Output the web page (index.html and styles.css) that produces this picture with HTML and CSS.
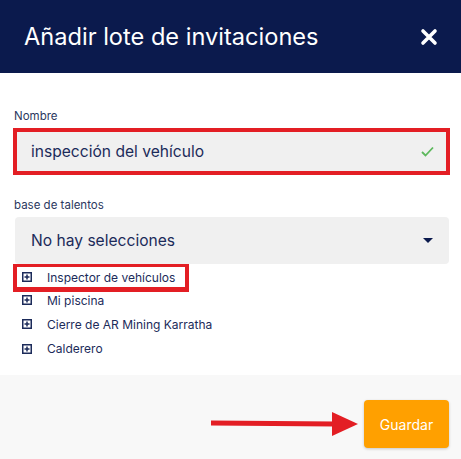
FILE: index.html
```html
<!DOCTYPE html>
<html lang="es">

<head>
    <meta charset="UTF-8">
    <meta name="viewport" content="width=device-width, initial-scale=1.0">
    <title>Añadir lote de invitaciones</title>
    <link rel="stylesheet" href="styles.css">
</head>

<body>
    <div class="modal">
        <div class="cabecera">
            <h1>Añadir lote de invitaciones</h1>
            <svg class="cerrar" width="18" height="18" viewBox="0 0 18 18">
                <path d="M3 3 L15 15 M15 3 L3 15" stroke="white" stroke-width="3.6" stroke-linecap="round" />
            </svg>
        </div>

        <div class="contenido">
            <p class="etiqueta">Nombre</p>
            <div class="marca">
                <div class="campo">
                    <span>inspección del vehículo</span>
                    <svg width="13" height="11" viewBox="0 0 13 11">
                        <path d="M1 6 L4.5 9.5 L12 1.5" stroke="#5cb85c" stroke-width="1.8" fill="none" />
                    </svg>
                </div>
            </div>

            <p class="etiqueta segunda">base de talentos</p>
            <div class="selector">
                <span>No hay selecciones</span>
                <span class="flecha"></span>
            </div>

            <ul class="arbol">
                <li class="marcado">
                    <svg class="mas" width="10" height="10" viewBox="0 0 10 10"><path d="M0.75 0.75 H9.25 V9.25 H0.75 Z M2.5 5 H7.5 M5 2.5 V7.5" stroke="#1c2b5a" stroke-width="1.5" fill="none" /></svg>
                    Inspector de vehículos
                </li>
                <li>
                    <svg class="mas" width="10" height="10" viewBox="0 0 10 10"><path d="M0.75 0.75 H9.25 V9.25 H0.75 Z M2.5 5 H7.5 M5 2.5 V7.5" stroke="#1c2b5a" stroke-width="1.5" fill="none" /></svg>
                    Mi piscina
                </li>
                <li>
                    <svg class="mas" width="10" height="10" viewBox="0 0 10 10"><path d="M0.75 0.75 H9.25 V9.25 H0.75 Z M2.5 5 H7.5 M5 2.5 V7.5" stroke="#1c2b5a" stroke-width="1.5" fill="none" /></svg>
                    Cierre de AR Mining Karratha
                </li>
                <li>
                    <svg class="mas" width="10" height="10" viewBox="0 0 10 10"><path d="M0.75 0.75 H9.25 V9.25 H0.75 Z M2.5 5 H7.5 M5 2.5 V7.5" stroke="#1c2b5a" stroke-width="1.5" fill="none" /></svg>
                    Calderero
                </li>
            </ul>
        </div>

        <div class="pie">
            <svg class="indicador" width="150" height="28" viewBox="0 0 150 28">
                <path d="M0 13 L124 14" stroke="#e31e24" stroke-width="5" />
                <path d="M121 2 L147 14 L121 26 Z" fill="#e31e24" />
            </svg>
            <button class="guardar">Guardar</button>
        </div>
    </div>
</body>

</html>
```

FILE: styles.css
```css
* {
    box-sizing: border-box;
    margin: 0;
    padding: 0;
}

body {
    width: 461px;
    height: 459px;
    font-family: Inter, 'Noto Sans', sans-serif;
    color: #1c2b5a;
    background-color: white;
}

.modal {
    display: flex;
    flex-direction: column;
    height: 459px;
}

.cabecera {
    height: 73px;
    padding: 0 23px 0 24px;
    display: flex;
    align-items: center;
    justify-content: space-between;
    background-color: #0b1a4d;
}

h1 {
    font-size: 23.6px;
    font-weight: 400;
    color: white;
}

.contenido {
    flex: 1;
    padding: 36px 11px 0 13px;
}

.etiqueta {
    font-size: 11.5px;
    color: #2b3860;
    padding-left: 1px;
    margin-bottom: 5px;
}

.segunda {
    margin-top: 23px;
}

.marca {
    border: 4px solid #e31e24;
}

.campo {
    height: 39px;
    padding: 0 12px 0 14px;
    display: flex;
    align-items: center;
    justify-content: space-between;
    background-color: #f0f0f0;
    font-size: 15.6px;
}

.selector {
    height: 47px;
    margin: 0 1px 0 2px;
    padding: 0 16px 0 16px;
    display: flex;
    align-items: center;
    justify-content: space-between;
    border-radius: 4px;
    background-color: #f0f0f0;
    font-size: 15.6px;
}

.flecha {
    width: 0;
    height: 0;
    border-left: 5px solid transparent;
    border-right: 5px solid transparent;
    border-top: 5px solid #0b1a4d;
}

.arbol {
    list-style-type: none;
    font-size: 12px;
}

.arbol li {
    height: 24.3px;
    display: flex;
    align-items: center;
    padding-left: 9px;
}

.marcado {
    width: 176px;
    height: 28px !important;
    padding-left: 5px !important;
    border: 4px solid #e31e24;
    border-top-width: 3px;
    border-bottom-width: 5px;
    margin-bottom: -4px;
}

.mas {
    margin-right: 15px;
    flex-shrink: 0;
}

.pie {
    height: 84px;
    padding: 25px 12px 0 0;
    display: flex;
    align-items: flex-start;
    justify-content: flex-end;
    background-color: #f8f8f8;
}

.indicador {
    margin-top: 10px;
    margin-right: 3px;
}

.guardar {
    width: 85px;
    height: 48px;
    border: none;
    border-radius: 4px;
    background-color: #ffa000;
    color: white;
    font-family: Inter, 'Noto Sans', sans-serif;
    font-size: 14px;
    box-shadow: 0 1px 3px rgba(0, 0, 0, 0.2);
}
```
